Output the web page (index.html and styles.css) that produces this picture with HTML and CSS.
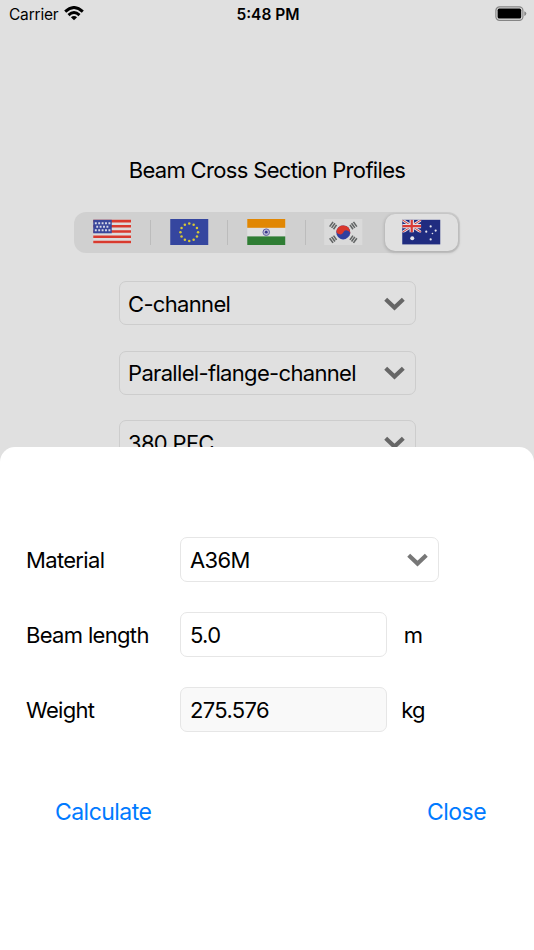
FILE: index.html
```html
<!DOCTYPE html>
<html lang="en">
<head>
<meta charset="utf-8">
<title>Beam Cross Section Profiles</title>
<link rel="stylesheet" href="styles.css">
</head>
<body>
<main class="screen">
  <header class="status">
    <div class="status-left"><span class="carrier">Carrier</span>
      <svg class="wifi" viewBox="0 0 20 15"><g fill="none" stroke="#000" stroke-width="2.9"><path d="M1.2 5.6Q10-2.6 18.8 5.6"/><path d="M4.5 9.1Q10 4 15.5 9.1"/></g><path d="M10 14.2 6.9 11.2Q10 8.7 13.1 11.2Z"/></svg>
    </div>
    <span class="clock">5:48 PM</span>
    <div class="status-right"><svg class="battery" viewBox="0 0 32 16"><rect x=".9" y=".9" width="27" height="13.4" rx="3.6" fill="none" stroke="#858585" stroke-width="1.2"/><rect x="2.6" y="2.6" width="23.6" height="10" rx="1.6" fill="#000"/><path d="M29.3 5.2Q31.3 6 31.3 7.6T29.3 10Z" fill="#858585"/></svg></div>
  </header>

  <h1 class="title">Beam Cross Section Profiles</h1>

  <div class="segments">
    <div class="segment">
      <svg class="flag" viewBox="0 0 38 26">
        <rect y=".8" width="38" height="24" fill="#dcdcdc"/>
        <path stroke="#d93a2e" stroke-width="2.6" d="M0 2.1H38M0 7.3H38M0 12.5H38M0 17.7H38M0 23H38"/>
        <rect y=".8" width="18.5" height="13.5" fill="#39479b"/>
        <path stroke="#d5d8e8" stroke-width="2" stroke-dasharray="1.9 1.5" d="M1.6 4.2H17.5M3 7.7H16.5M1.6 11.2H17.5"/>
      </svg>
    </div>
    <div class="segment">
      <svg class="flag" viewBox="0 0 38 26">
        <rect width="38" height="26" fill="#35469f"/>
        <g fill="#d8c936"><circle cx="19" cy="4.5" r="1.25"/><circle cx="23.4" cy="5.8" r="1.25"/><circle cx="26.7" cy="9" r="1.25"/><circle cx="27.8" cy="13.3" r="1.25"/><circle cx="26.7" cy="17.4" r="1.25"/><circle cx="23.4" cy="20.7" r="1.25"/><circle cx="19" cy="22" r="1.25"/><circle cx="14.6" cy="20.7" r="1.25"/><circle cx="11.3" cy="17.4" r="1.25"/><circle cx="10.2" cy="13.3" r="1.25"/><circle cx="11.3" cy="9" r="1.25"/><circle cx="14.6" cy="5.8" r="1.25"/></g>
      </svg>
    </div>
    <div class="segment">
      <svg class="flag" viewBox="0 0 38 26">
        <rect width="38" height="26" fill="#e0e0e0"/><rect width="38" height="8.8" fill="#e18703"/><rect y="17.4" width="38" height="8.6" fill="#2f7d34"/>
        <circle cx="19" cy="13.2" r="3.3" fill="#b9b9d4" stroke="#6664a8" stroke-width="1"/><circle cx="19" cy="13.2" r="1.4" fill="#39388c"/>
      </svg>
    </div>
    <div class="segment">
      <svg class="flag" viewBox="0 0 38 26">
        <rect width="38" height="26" fill="#dadada"/>
        <g transform="translate(19 13.4) rotate(25)"><circle r="7" fill="#303f9f"/><path fill="#d9372c" d="M-7 0A7 7 0 0 1 7 0A3.5 3.5 0 0 0 0 0A3.5 3.5 0 0 1-7 0Z"/></g>
        <g fill="none" stroke="#626565" stroke-width="1.6">
          <path d="M5.4 7.6 8.8 2.9M7.4 8.9 10.7 4.3M9.3 10.2 12.3 5.9"/>
          <path d="M32.6 7.6 29.2 2.9M30.6 8.9 27.3 4.3M28.7 10.2 25.7 5.9M5.4 19.2 8.8 23.9M7.4 17.9 10.7 22.5M9.3 16.6 12.3 20.9M32.6 19.2 29.2 23.9M30.6 17.9 27.3 22.5M28.7 16.6 25.7 20.9"/>
        </g>
      </svg>
    </div>
    <div class="segment selected">
      <svg class="flag" viewBox="0 0 38 26">
        <rect y=".8" width="38" height="24.6" fill="#202c80"/>
        <svg y=".8" width="19" height="12.6" viewBox="0 0 19 12.6"><path stroke="#dedee6" stroke-width="2.8" d="M0 0 19 12.6M19 0 0 12.6"/><path stroke="#d93b36" stroke-width="1" d="M0 0 19 12.6M19 0 0 12.6"/><path stroke="#dedee6" stroke-width="4.4" d="M9.5 0V12.6M0 6.3H19"/><path stroke="#d93b36" stroke-width="2.2" d="M9.5 0V12.6M0 6.3H19"/></svg>
        <g fill="#e6e6ec"><circle cx="10" cy="19.2" r="2"/><circle cx="28.4" cy="7.4" r="1.1"/><circle cx="24" cy="12.7" r="1.1"/><circle cx="33.4" cy="11.6" r="1.1"/><circle cx="30.2" cy="14.5" r=".8"/><circle cx="28.4" cy="20.4" r="1.1"/></g>
      </svg>
    </div>
  </div>

  <div class="profiles">
    <div class="field"><span>C-channel</span><svg class="chevron" viewBox="0 0 21 14"><path d="M1.7 2.2 10.5 10.5 19.3 2.2"/></svg></div>
    <div class="field"><span>Parallel-flange-channel</span><svg class="chevron" viewBox="0 0 21 14"><path d="M1.7 2.2 10.5 10.5 19.3 2.2"/></svg></div>
    <div class="field"><span>380 PFC</span><svg class="chevron" viewBox="0 0 21 14"><path d="M1.7 2.2 10.5 10.5 19.3 2.2"/></svg></div>
  </div>

  <section class="sheet">
    <div class="row"><label class="label">Material</label><div class="field wide"><span>A36M</span><svg class="chevron" viewBox="0 0 21 14"><path d="M1.7 2.2 10.5 10.5 19.3 2.2"/></svg></div></div>
    <div class="row"><label class="label">Beam length</label><div class="field"><span>5.0</span></div><span class="unit">m</span></div>
    <div class="row"><label class="label">Weight</label><div class="field readonly"><span>275.576</span></div><span class="unit">kg</span></div>
    <div class="actions"><a class="action">Calculate</a><a class="action">Close</a></div>
  </section>
</main>
</body>
</html>
```
FILE: styles.css
```css
* { box-sizing: border-box; }
body { margin: 0; background: #e0e0e0; color: #000; font-family: Inter, sans-serif; font-size: 22px; letter-spacing: -0.67px; }
.screen { position: relative; width: 534px; height: 950px; overflow: hidden; display: flex; flex-direction: column; align-items: center; }
.status { width: 100%; height: 28px; padding: 0 7px 0 9px; display: grid; grid-template-columns: 1fr auto 1fr; align-items: center; font-size: 15.5px; letter-spacing: 0; }
.status-left { display: flex; align-items: center; gap: 6px; }
.carrier { letter-spacing: -0.2px; }
.status-right { display: flex; justify-content: flex-end; }
.wifi { width: 20px; height: 15px; margin-top: -2px; }
.battery { width: 32px; height: 16px; margin-top: -1px; }
.clock { font-weight: 600; }
.title { margin: 127px 0 0; height: 30px; line-height: 30px; font-size: 22px; font-weight: 400; }
.segments { width: 386px; height: 41px; margin-top: 27px; display: grid; grid-template-columns: repeat(5, 1fr); border-radius: 12px; background: #d0d0d0; }
.segment { display: flex; align-items: center; justify-content: center; padding-bottom: 1px; border-right: 1px solid transparent; }
.segment:nth-child(-n+3) { border-image: linear-gradient(transparent 22%, #bcbcbc 22%, #bcbcbc 79%, transparent 79%) 1; border-width: 0 1px 0 0; }
.segment.selected { margin: 2px; border: 0; border-radius: 10px; background: #e0e0e0; box-shadow: 0 1px 3px 1px rgba(0,0,0,.14); }
.flag { width: 38.5px; height: 26px; }
.profiles { width: 297px; margin-top: 28px; display: flex; flex-direction: column; gap: 25.6px; }
.field { height: 44.5px; padding: 1px 9px 0; display: flex; align-items: center; justify-content: space-between; border: 1px solid #cdcdcd; border-radius: 7px; white-space: nowrap; }
.profiles .field { height: 44px; }
.profiles .field span { margin-left: -0.5px; }
.chevron { width: 21px; height: 14px; margin-right: 0.7px; fill: none; stroke: #666; stroke-width: 4.2; }
.sheet { position: absolute; top: 447px; left: 0; width: 534px; height: 503px; padding: 90px 27px 0 26px; border-radius: 15px 15px 0 0; background: #fff; display: flex; flex-direction: column; gap: 30.5px; }
.row { display: grid; grid-template-columns: 154px 207px 52px; align-items: center; }
.sheet .field { border-color: #e6e6e6; }
.sheet .wide { grid-column: 2 / 4; width: 259px; }
.sheet .chevron { stroke: #777; }
.sheet .readonly { background: #f9f9f9; }
.label, .unit { padding-top: 1px; }
.unit { text-align: center; }
.actions { display: flex; justify-content: space-between; margin-top: 35px; padding: 0 21px 0 29px; font-size: 23px; line-height: 30px; color: #007aff; letter-spacing: -0.55px; }
```
